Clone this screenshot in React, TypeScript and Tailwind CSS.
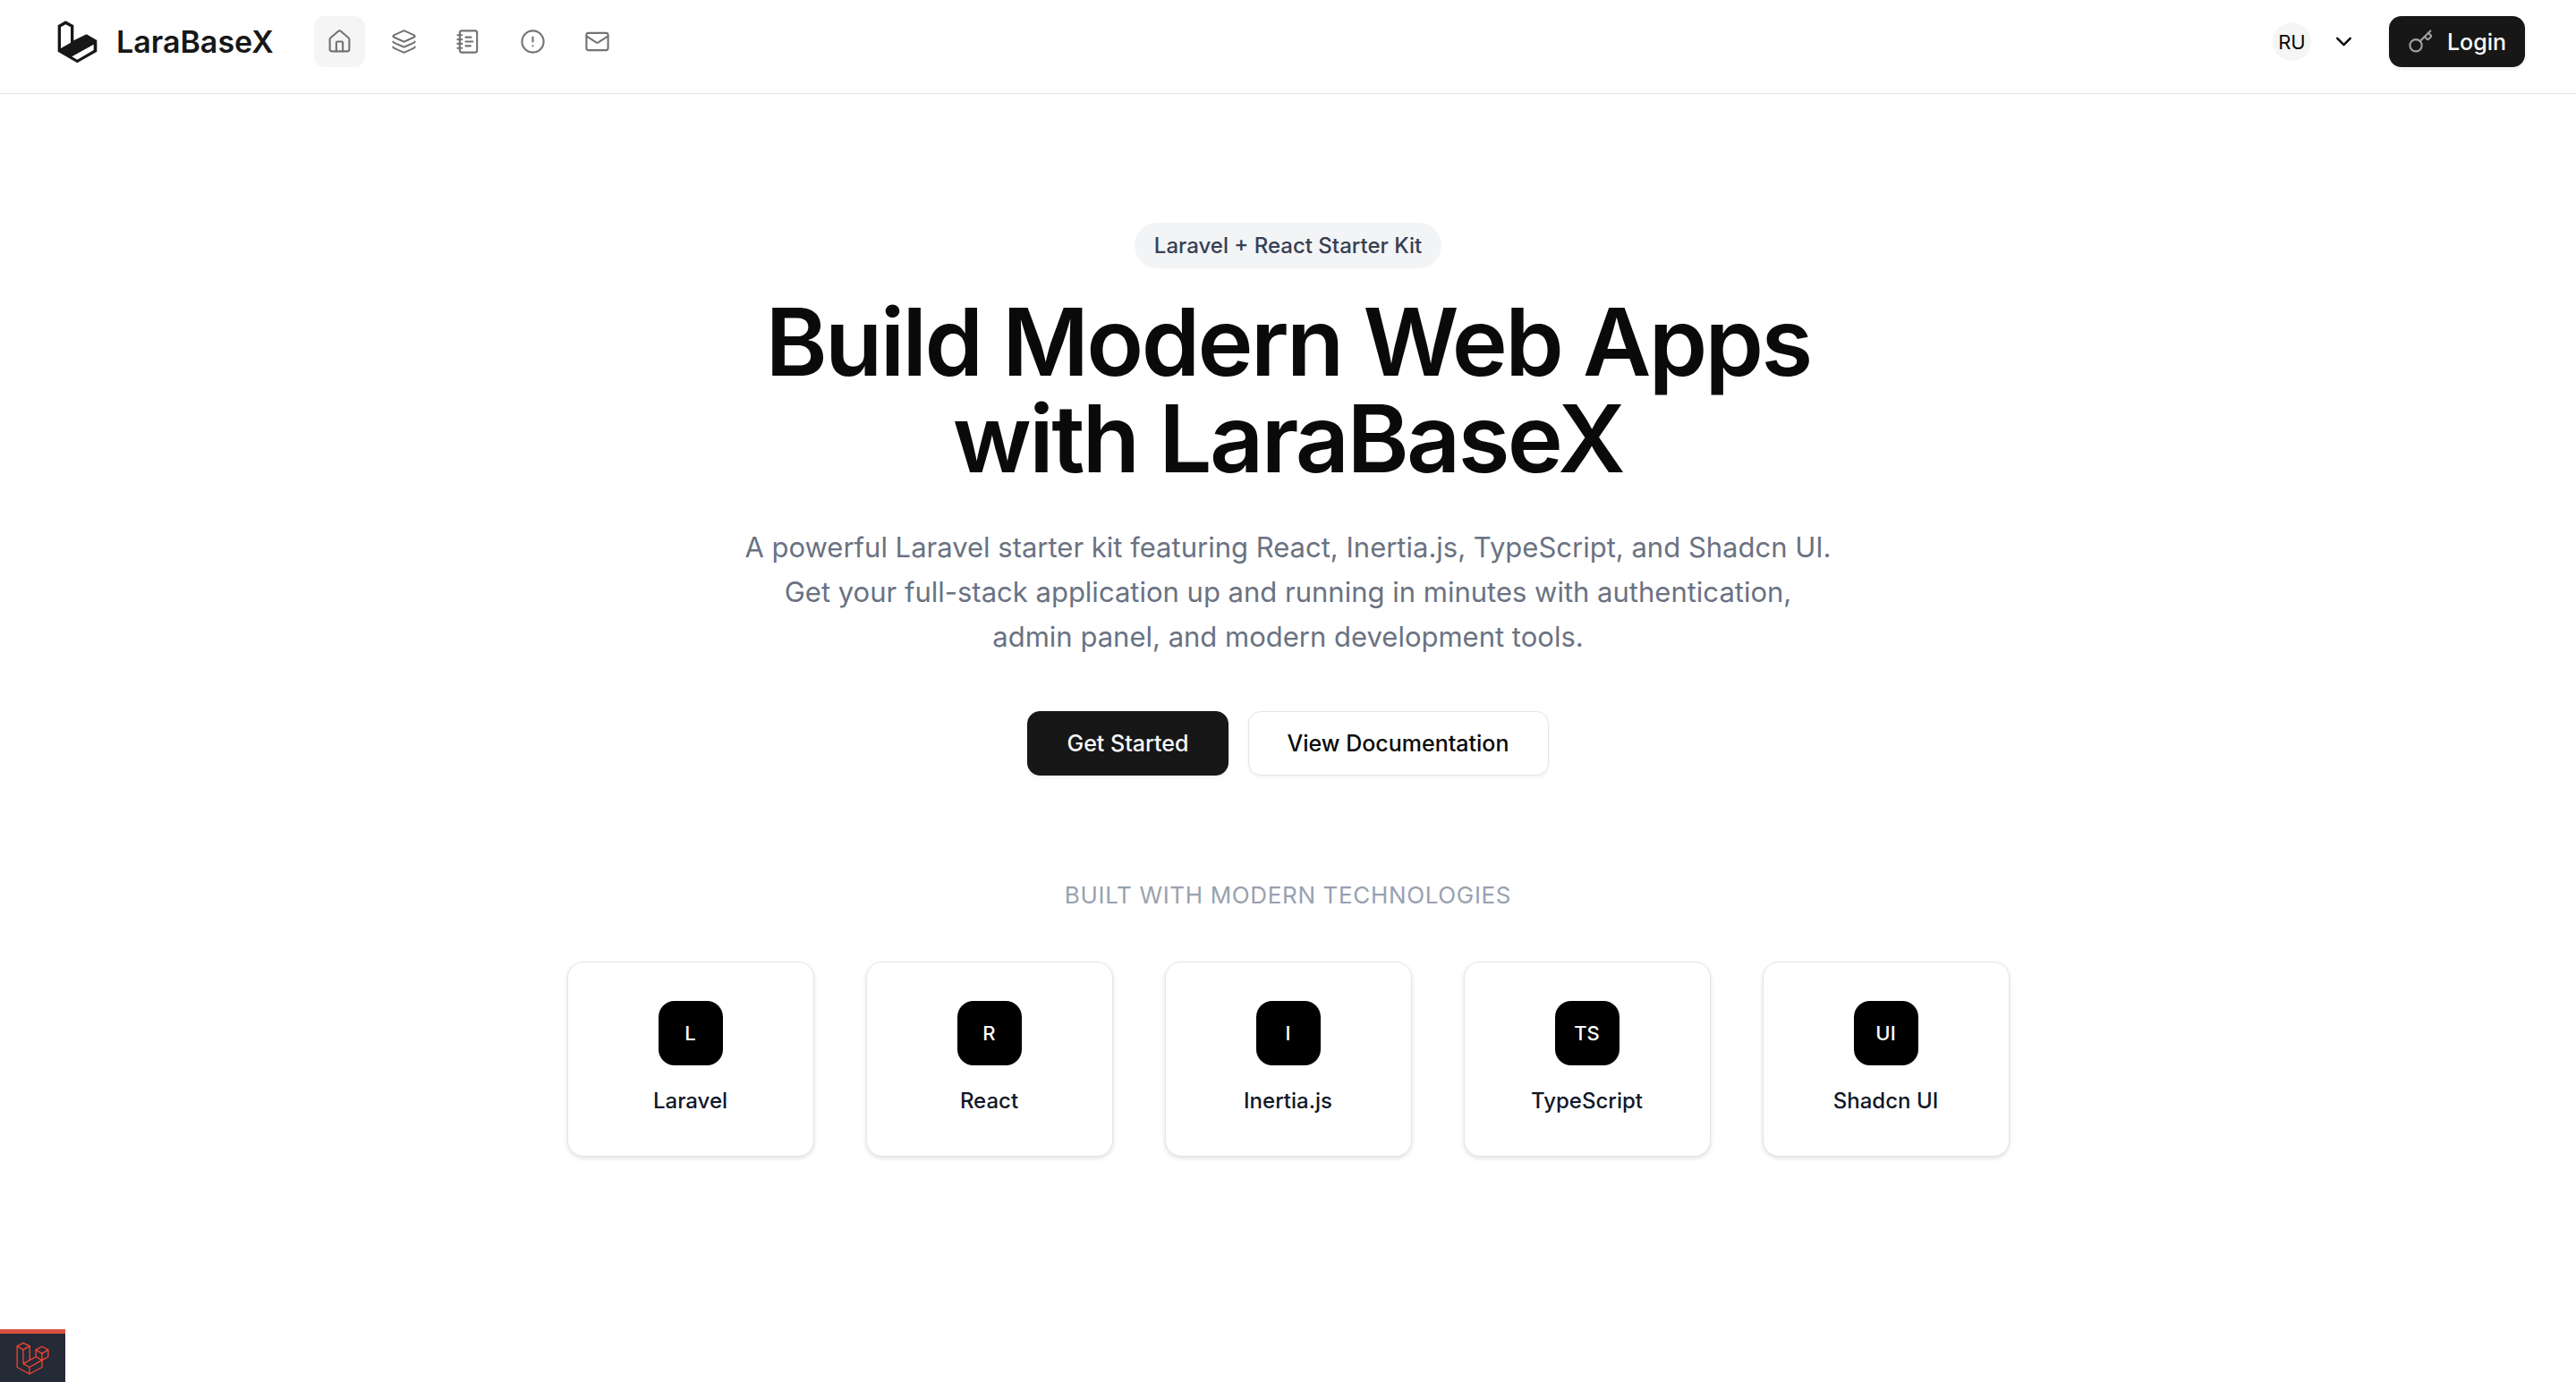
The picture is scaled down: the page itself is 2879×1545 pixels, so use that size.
import type { ReactNode } from 'react';
import { ChevronDown, CircleAlert, House, Layers, Mail, NotebookText } from 'lucide-react';

const navItems = [
  { label: 'Home', icon: House, active: true },
  { label: 'Features', icon: Layers, active: false },
  { label: 'Blog', icon: NotebookText, active: false },
  { label: 'About', icon: CircleAlert, active: false },
  { label: 'Contact', icon: Mail, active: false },
];

const technologies = [
  { short: 'L', name: 'Laravel' },
  { short: 'R', name: 'React' },
  { short: 'I', name: 'Inertia.js' },
  { short: 'TS', name: 'TypeScript' },
  { short: 'UI', name: 'Shadcn UI' },
];

function LogoMark() {
  return (
    <svg viewBox="13 13 135 144" className="h-[48px] w-[45px] shrink-0 fill-[#171717]" aria-hidden="true">
      <path
        fillRule="evenodd"
        d="M15 29 41 14 68 29V80L111 59 146 79V117L80 155 15 117ZM25 35V106L58 87V35L41 26ZM62 134 80 144 135 112V93Z"
      />
    </svg>
  );
}

function KeyIcon() {
  return (
    <svg
      viewBox="0 0 24 24"
      className="size-[29px] text-neutral-400"
      fill="none"
      stroke="currentColor"
      strokeWidth="1.75"
      strokeLinecap="round"
      strokeLinejoin="round"
      aria-hidden="true"
    >
      <path d="m15.5 7.5 2.3 2.3a1 1 0 0 0 1.4 0l2.1-2.1a1 1 0 0 0 0-1.4L19 4" />
      <path d="m21 2-9.6 9.6" />
      <circle cx="7.5" cy="15.5" r="5.5" />
    </svg>
  );
}

function LaravelOutline() {
  return (
    <svg
      viewBox="58 117 112 113"
      className="size-[37px]"
      fill="none"
      stroke="#f4452f"
      strokeWidth="4"
      strokeLinejoin="round"
      aria-hidden="true"
    >
      <path d="M61 132 82 121 104 132 82 144Z" />
      <path d="M61 132V204L103 227 146 204V180" />
      <path d="M82 144V192L103 204V227" />
      <path d="M104 132V180" />
      <path d="M82 192 125 168 146 180 103 204" />
      <path d="M125 145 146 133 167 145 146 157Z" />
      <path d="M125 145V168" />
      <path d="M146 157V180L167 168V145" />
    </svg>
  );
}

function Header() {
  return (
    <header className="flex items-center justify-between border-b border-neutral-200 pt-[18px] pr-[57px] pb-[29px] pl-16">
      <div className="flex items-center gap-[45px]">
        <a href="#" className="flex items-center gap-[21px] text-[34px] leading-[48px] font-semibold text-[#171717]">
          <LogoMark />
          LaraBaseX
        </a>
        <nav className="flex items-center gap-[15px]">
          {navItems.map(({ label, icon: Icon, active }) => (
            <a
              key={label}
              href="#"
              aria-label={label}
              className={
                active
                  ? 'flex size-[57px] items-center justify-center rounded-[12px] bg-neutral-100 text-neutral-500'
                  : 'flex size-[57px] items-center justify-center rounded-[12px] text-neutral-500'
              }
            >
              <Icon className="size-[29px]" strokeWidth={1.75} />
            </a>
          ))}
        </nav>
      </div>
      <div className="flex items-center gap-[14px]">
        <button type="button" aria-label="Language" className="flex h-[57px] items-center gap-[22px] px-[22px]">
          <span className="flex size-[43px] items-center justify-center rounded-full bg-neutral-100 text-[22px] leading-[28px] text-neutral-950">
            RU
          </span>
          <ChevronDown className="size-[29px] text-neutral-950" strokeWidth={2} />
        </button>
        <button
          type="button"
          className="flex h-[57px] items-center gap-[15px] rounded-[14px] bg-[#171717] px-[21px] text-[25px] leading-[36px] font-medium text-neutral-50 shadow-[0_2px_4px_rgba(0,0,0,0.08)]"
        >
          <KeyIcon />
          Login
        </button>
      </div>
    </header>
  );
}

function LinkButton({ className, children }: { className: string; children: ReactNode }) {
  return (
    <a
      href="#"
      className={`flex h-[72px] items-center rounded-[14px] border px-[43px] text-[25px] leading-[36px] font-medium shadow-[0_2px_4px_rgba(0,0,0,0.06)] ${className}`}
    >
      {children}
    </a>
  );
}

function Hero() {
  return (
    <section className="flex flex-col items-center text-center">
      <span className="rounded-full bg-gray-100 px-[22px] py-[7px] text-[24px] leading-[37px] font-medium text-gray-700">
        Laravel + React Starter Kit
      </span>
      <h1 className="mt-[28px] max-w-[1300px] text-[105px] leading-[108px] font-semibold tracking-tight text-neutral-950">
        Build Modern Web Apps <br />
        with LaraBaseX
      </h1>
      <p className="mt-[43px] max-w-[1220px] text-[31px] leading-[50px] text-gray-500">
        A powerful Laravel starter kit featuring React, Inertia.js, TypeScript, and Shadcn UI. Get your full-stack
        application up and running in minutes with authentication, admin panel, and modern development tools.
      </p>
      <div className="mt-[58px] flex gap-[22px]">
        <LinkButton className="border-[#171717] bg-[#171717] text-neutral-50">Get Started</LinkButton>
        <LinkButton className="border-neutral-200 bg-white text-neutral-950">View Documentation</LinkButton>
      </div>
    </section>
  );
}

function Technologies() {
  return (
    <section className="mt-[116px] w-full max-w-[1612px] text-center">
      <h2 className="text-[26px] leading-[36px] tracking-wide text-gray-400 uppercase">
        Built with modern technologies
      </h2>
      <ul className="mt-[56px] grid grid-cols-5 gap-[58px]">
        {technologies.map(({ short, name }) => (
          <li
            key={name}
            className="flex flex-col items-center gap-[22px] rounded-[18px] border border-neutral-200 bg-white py-[43px] shadow-[0_2px_5px_rgba(0,0,0,0.12)]"
          >
            <span className="flex size-[72px] items-center justify-center rounded-[18px] bg-black text-[22px] leading-[28px] font-medium text-white">
              {short}
            </span>
            <span className="text-[24px] leading-[36px] font-medium text-gray-900">{name}</span>
          </li>
        ))}
      </ul>
    </section>
  );
}

export default function App() {
  return (
    <div className="min-h-screen bg-white font-['Inter',sans-serif] antialiased">
      <Header />
      <main className="flex flex-col items-center px-8 pt-36 pb-36">
        <Hero />
        <Technologies />
      </main>
      <button
        type="button"
        aria-label="Open debug bar"
        className="fixed bottom-0 left-0 flex h-[59px] w-[73px] items-center justify-center border-t-[5px] border-[#d84f40] bg-[#252a37]"
      >
        <LaravelOutline />
      </button>
    </div>
  );
}
